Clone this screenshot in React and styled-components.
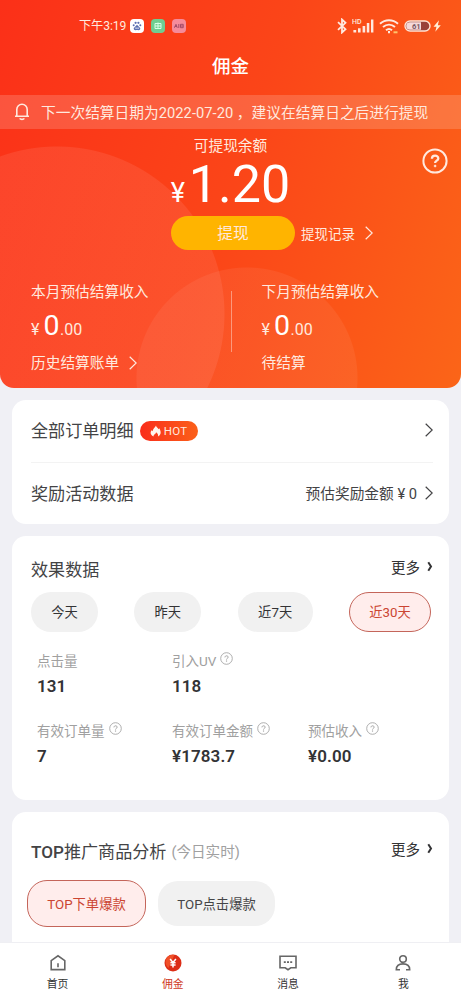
import styled, { createGlobalStyle, css } from "styled-components";

const theme = {
  white: "#ffffff",
  cream: "#ffe9df",
  page: "#f0f0f5",
  text: "#434345",
  textDark: "#333335",
  grey: "#a0a0a0",
  pill: "#f1f1f1",
  red: "#cb4532",
  redBorder: "#c4655a",
  redSoft: "#ffedec",
  yellow: "#ffb400",
};

const GlobalStyle = createGlobalStyle`
  * {
    box-sizing: border-box;
  }

  body {
    margin: 0;
    background: ${theme.page};
    font-family: Roboto, "Noto Sans CJK SC", sans-serif;
    color: ${theme.text};
  }

  h1, h2, p {
    margin: 0;
    font-weight: 400;
  }

  svg {
    display: block;
    flex: none;
  }
`;

const Screen = styled.div`
  display: flex;
  flex-direction: column;
  width: 461px;
  height: 1000px;
  overflow: hidden;
`;

const Content = styled.main`
  flex: 1;
  min-height: 0;
  overflow: hidden;
`;

const Hero = styled.header`
  height: 388px;
  overflow: hidden;
  border-radius: 0 0 14px 14px;
  color: ${theme.cream};
  background:
    radial-gradient(circle at 247px 378px, rgba(255, 255, 255, 0.06) 110px, transparent 111px),
    radial-gradient(circle at 57px 314px, rgba(255, 130, 110, 0.22) 167px, transparent 168px),
    linear-gradient(108deg, #fb3018 0%, #fb4518 50%, #fb6518 100%);
`;

const StatusBar = styled.div`
  display: flex;
  align-items: center;
  height: 52px;
  padding: 0 19px 0 79px;
  font-size: 13px;
`;

const Clock = styled.span`
  width: 51px;
  white-space: nowrap;
  font-size: 12.2px;
  line-height: 16px;
  letter-spacing: -0.1px;
`;

const AppBadge = styled.span`
  display: flex;
  align-items: center;
  justify-content: center;
  width: 14px;
  height: 14px;
  margin-right: 7px;
  border-radius: 4px;
  background: ${(props) => props.$color};
`;

const StatusIcons = styled.div`
  display: flex;
  align-items: center;
  gap: 5px;
  margin-left: auto;
`;

const PageTitle = styled.h1`
  height: 28px;
  line-height: 30px;
  text-align: center;
  font-size: 18.5px;
  font-weight: 500;
  color: ${theme.white};
`;

const Notice = styled.div`
  display: flex;
  align-items: center;
  height: 34px;
  margin-top: 15px;
  padding: 0 0 1px 14px;
  background: rgba(255, 255, 255, 0.17);
  white-space: nowrap;
  font-size: 14.7px;

  p {
    margin-left: 11px;
    letter-spacing: 0.03px;
  }
`;

const Balance = styled.section`
  display: grid;
  grid-template-columns: 1fr 290px 1fr;
  height: 87px;

  > svg {
    margin: 19px 0 0 46px;
  }
`;

const BalanceInfo = styled.div`
  grid-column: 2;
  text-align: center;
  font-size: 14.7px;
  line-height: 35px;
`;

const BalanceAmount = styled.div`
  display: flex;
  align-items: baseline;
  justify-content: center;
  height: 52px;
  margin-top: -8px;
  line-height: 58px;
  font-size: 52px;
  color: ${theme.white};

  small {
    width: 18px;
    font-size: 27px;
    text-align: left;
  }
`;

const Withdraw = styled.div`
  display: flex;
  align-items: center;
  height: 34px;
  padding-left: 171px;
  font-size: 13.5px;

  > span {
    margin: 0 10px 0 6px;
  }
`;

const WithdrawButton = styled.button`
  width: 124px;
  height: 34px;
  padding: 0 0 2px;
  border: 0;
  border-radius: 17px;
  background: ${theme.yellow};
  color: ${theme.cream};
  font: inherit;
  font-size: 15.7px;
`;

const Forecasts = styled.section`
  display: flex;
  align-items: flex-start;
  margin-top: 31px;
  padding-left: 31px;
`;

const ForecastDivider = styled.div`
  width: 1px;
  height: 61px;
  margin: 10px 30px 0 0;
  background: rgba(255, 255, 255, 0.4);
`;

const ForecastColumn = styled.div`
  width: 200px;
  font-size: 14.7px;
  line-height: 22px;
`;

const ForecastAmount = styled.div`
  height: 38px;
  margin: 4px 0 0;
  line-height: 38px;
  font-size: 16px;

  b {
    margin: 0 0.5px 0 4px;
    font-size: 28.5px;
    font-weight: 400;
    color: ${theme.white};
  }
`;

const ForecastFooter = styled.div`
  display: flex;
  align-items: center;
  gap: 10px;
  margin-top: 7px;
`;

const Card = styled.section`
  height: ${(props) => props.$height}px;
  margin: 12px 12px 0;
  padding: ${(props) => props.$top || 0}px 16px 0 19px;
  border-radius: 14px;
  background: ${theme.white};
`;

const MenuRow = styled.div`
  display: flex;
  align-items: center;
  height: 62px;
  padding-bottom: 3px;
  font-size: 17.1px;

  & + & {
    border-top: 1px solid #f3f3f3;
  }
`;

const RowEnd = styled.span`
  display: flex;
  align-items: center;
  gap: 8px;
  margin-left: auto;
  font-size: 14.7px;

  svg {
    margin-top: 1px;
  }
`;

const HotBadge = styled.span`
  display: flex;
  align-items: center;
  justify-content: center;
  gap: 3px;
  width: 58px;
  height: 20px;
  margin: 3px 0 0 6px;
  border-radius: 10px;
  background: linear-gradient(90deg, #fa2d1b, #fb6019);
  color: ${theme.cream};
  font-size: 11.5px;
  letter-spacing: 0.3px;
`;

const CardHeader = styled.div`
  display: flex;
  align-items: center;
  height: 30px;

  h2 {
    font-size: 17.1px;
  }

  b {
    font-weight: 500;
  }

  em {
    margin-left: 5px;
    color: ${theme.grey};
    font-size: 14.6px;
    font-style: normal;
  }
`;

const More = styled.span`
  display: flex;
  align-items: center;
  gap: 7px;
  margin: 0 0 4px auto;
  color: ${theme.textDark};
  font-size: 14.5px;
`;

const Pill = styled.button`
  width: ${(props) => props.$width}px;
  height: 40px;
  padding: 0 0 1px;
  border: 0;
  border-radius: 20px;
  background: ${theme.pill};
  color: ${theme.textDark};
  font: inherit;
  font-size: 13.3px;

  ${(props) =>
    props.$active &&
    css`
      border: 1px solid ${theme.redBorder};
      background: ${theme.redSoft};
      color: ${theme.red};
    `}
`;

const Periods = styled.div`
  display: flex;
  justify-content: space-between;
  margin-top: 9px;
  padding-right: 2px;
`;

const Metrics = styled.div`
  display: grid;
  grid-template-columns: 135px 136px 1fr;
  grid-auto-rows: 70px;
  margin-top: 16px;
  padding-left: 6px;
`;

const MetricLabel = styled.div`
  display: flex;
  align-items: center;
  gap: 4px;
  height: 24px;
  color: ${theme.grey};
  font-size: 13.5px;
  white-space: nowrap;

  svg {
    margin-bottom: 3px;
  }
`;

const MetricValue = styled.div`
  height: 26px;
  line-height: 26px;
  margin-top: 1px;
  color: ${theme.textDark};
  font-size: 17px;
  font-weight: 600;
  letter-spacing: 0.1px;
`;

const Chips = styled.div`
  display: flex;
  align-items: center;
  gap: 12px;
  margin: 15px 0 0 -4px;

  ${Pill} {
    height: 45px;
    padding: 0;
    color: #454547;
  }

  ${Pill}:first-child {
    height: 47px;
    color: ${theme.red};
  }
`;

const TabBar = styled.nav`
  display: grid;
  grid-template-columns: repeat(4, 1fr);
  height: 58px;
  background: ${theme.white};
  border-top: 1px solid #efeff3;
`;

const TabItem = styled.div`
  display: flex;
  flex-direction: column;
  align-items: center;
  padding-top: 11px;
  color: ${(props) => (props.$active ? "#cf3a24" : "#333")};
  font-size: 10.8px;

  span {
    margin-top: 5px;
    line-height: 16px;
  }
`;

const Chevron = () => (
  <svg width="8" height="14" viewBox="0 0 8 14" fill="none">
    <path d="M.7.7 7.2 7 .7 13.3" stroke="currentColor" strokeWidth="1.2" />
  </svg>
);

const SmallChevron = () => (
  <svg width="6" height="11" viewBox="0 0 6 11" fill="none">
    <path d="M1.3 1.2 4 5.5 1.3 9.8" stroke="currentColor" strokeWidth="2" />
  </svg>
);

const HelpIcon = ({ size = 13, stroke = 1.7 }) => (
  <svg width={size} height={size} viewBox="0 0 26 26" fill="none" stroke="currentColor">
    <circle cx="13" cy="13" r="11.6" strokeWidth={stroke} />
    <path d="M9.9 10.7c0-4 6.4-4 6.4-.3 0 2.2-3.2 2.3-3.2 4.6" strokeWidth={stroke * 1.15} />
    <circle cx="13.1" cy="18" r="1" fill="currentColor" strokeWidth={stroke * 0.3} />
  </svg>
);

const BellIcon = () => (
  <svg width="16" height="19" viewBox="0 0 16 19" fill="none" stroke="currentColor" strokeWidth="1.6">
    <path d="M1 14.3h14M2.8 14V7.4a5.2 5.2 0 0 1 10.4 0V14" />
    <path d="M5.7 16.3c.8 1.4 3.8 1.4 4.6 0" />
  </svg>
);

const BluetoothIcon = () => (
  <svg width="10" height="16" viewBox="0 0 10 16" fill="none" stroke="currentColor" strokeWidth="1.8">
    <path d="m1 4.2 7.5 7L5 14.5v-13l3.5 3.3L1 11.8" />
  </svg>
);

const SignalIcon = () => (
  <svg width="22" height="16" viewBox="0 0 22 16" fill="currentColor">
    <text x="0" y="5.8" fontSize="7" fontWeight="500" fontFamily="Roboto">HD</text>
    <path d="M1.4 12h2.8v2.4H1.4zM6 10.3h2.6v4.1H6zM10.6 8h2.6v6.4h-2.6zM14.8 5h2.5v9.4h-2.5zM19 1.6h2.4v12.8H19z" />
  </svg>
);

const WifiIcon = () => (
  <svg width="20" height="15" viewBox="0 0 20 15" fill="none" stroke="currentColor" strokeWidth="2">
    <path d="M1 4.8c5.2-4.7 12.8-4.7 18 0M4 8.1c3.6-3.1 8.4-3.1 12 0M7 11.2c1.8-1.5 4.2-1.5 6 0" />
    <path d="M10 12v2.3" />
    <path d="M14.5 13.3h4" stroke="#ffc36b" />
  </svg>
);

const BatteryIcon = () => (
  <svg width="38" height="14" viewBox="0 0 38 14">
    <rect x="1" y="2" width="25" height="10" rx="5" fill="#9a4039" stroke="#ffe3d5" strokeWidth="1.4" />
    <path d="M6 3.2h11v7.6H6a3.8 3.8 0 0 1 0-7.6" fill="#f5d9da" />
    <text x="8" y="9.8" fontSize="7.6" fontWeight="700" fontFamily="Roboto" fill="#795762">61</text>
    <path d="m35 1.2-5.5 6.5h3l-1.2 5.1 5.5-6.6h-3z" fill="#fff0d8" />
  </svg>
);

const PawIcon = () => (
  <svg width="10" height="10" viewBox="0 0 10 10" fill="#5b6fb0">
    <circle cx="3.6" cy="1.8" r="1.1" />
    <circle cx="6.4" cy="1.8" r="1.1" />
    <circle cx="1.7" cy="4.2" r="1" />
    <circle cx="8.3" cy="4.2" r="1" />
    <path d="M5 3.8 8.2 7c.6 2.5-2 2.2-3.2 2-1.2.2-3.8.5-3.2-2z" />
    <path d="M3.6 6.5v1h1v-1M5.6 6.5v1h1v-1" fill="none" stroke="#fff" strokeWidth=".6" />
  </svg>
);

const GridIcon = () => (
  <svg width="8" height="8" viewBox="0 0 8 8" fill="none" stroke="#d6ffe7" strokeWidth="1">
    <path d="M1 1.5h6v5H1zM1 4h6M4 .5v6" />
  </svg>
);

const PinkIcon = () => (
  <svg width="10" height="6" viewBox="0 0 10 6" fill="none" stroke="#a34b69" strokeWidth="1">
    <path d="M.3 4.8 2 1.3l1.3 3.5M1 3.5h2M4.8 1v4M6.5 1.3h2.7v3.4H6.5zM6.5 3h2.7" />
  </svg>
);

const FlameIcon = () => (
  <svg width="11" height="12" viewBox="0 0 11 12" fill="#fff4ed">
    <path d="M6 .5c.3 2 2 2.4 2.5 3.7.4-.2.6-.5.7-.9 2.3 3.5 1.9 6.4-1.2 8.2.4-1.8-.3-3-2-4.2.1 1.8-2.8 1.9-2.5 4.2C.1 9.5-.2 7 2 4.9c.1.7.4 1.1.8 1.3C2.8 3.5 4.9 3 6 .5z" />
  </svg>
);

const HomeIcon = () => (
  <svg width="16" height="18" viewBox="0 0 16 18" fill="none" stroke="#666" strokeWidth="1.6">
    <path d="M1.2 6.6 8 1.8l6.8 4.8v9H1.2zM8 9.3v4" />
  </svg>
);

const CoinIcon = () => (
  <svg width="18" height="18" viewBox="0 0 18 18" fill="none">
    <circle cx="9" cy="9" r="8.5" fill="#dc2d16" />
    <path d="M3.4 3a8.3 8.3 0 0 1 7-2l-6 13C1 11 .6 6.2 3.4 3" fill="#f05028" />
    <path d="M6.1 5 9 8.5 11.9 5M9 8.5v5M6.4 8.8h5.2M6.4 11h5.2" stroke="#fff" strokeWidth="1.5" />
  </svg>
);

const MessageIcon = () => (
  <svg width="18" height="18" viewBox="0 0 18 18" fill="none" stroke="#666" strokeWidth="1.6">
    <path d="M1 2.3h16v11.5h-5.2L9 15.7l-2.8-1.9H1z" />
    <path d="M4.8 8.1h2M8 8.1h2M11.2 8.1h2" strokeWidth="1.7" />
  </svg>
);

const UserIcon = () => (
  <svg width="16" height="18" viewBox="0 0 16 18" fill="none" stroke="#666" strokeWidth="1.6">
    <circle cx="8" cy="5" r="3.3" />
    <path d="M5 15.8H1.3c0-3.8 2.6-5.9 6.7-5.9s6.7 2.1 6.7 5.9H11" />
  </svg>
);

const periods = [
  { label: "今天", width: 67 },
  { label: "昨天", width: 67 },
  { label: "近7天", width: 75 },
  { label: "近30天", width: 82, active: true },
];

const metrics = [
  { label: "点击量", value: "131" },
  { label: "引入UV", value: "118", help: true },
  null,
  { label: "有效订单量", value: "7", help: true },
  { label: "有效订单金额", value: "¥1783.7", help: true },
  { label: "预估收入", value: "¥0.00", help: true },
];

const tabs = [
  { label: "首页", Icon: HomeIcon },
  { label: "佣金", Icon: CoinIcon, active: true },
  { label: "消息", Icon: MessageIcon },
  { label: "我", Icon: UserIcon },
];

const Forecast = ({ label, children }) => (
  <ForecastColumn>
    <p>{label}</p>
    <ForecastAmount>
      ¥<b>0</b>.00
    </ForecastAmount>
    <ForecastFooter>{children}</ForecastFooter>
  </ForecastColumn>
);

const App = () => {
  return (
    <Screen>
      <GlobalStyle />
      <Content>
        <Hero>
          <StatusBar>
            <Clock>下午3:19</Clock>
            <AppBadge $color="#fff"><PawIcon /></AppBadge>
            <AppBadge $color="#70cd91"><GridIcon /></AppBadge>
            <AppBadge $color="#f58b9b"><PinkIcon /></AppBadge>
            <StatusIcons>
              <BluetoothIcon />
              <SignalIcon />
              <WifiIcon />
              <BatteryIcon />
            </StatusIcons>
          </StatusBar>
          <PageTitle>佣金</PageTitle>
          <Notice>
            <BellIcon />
            <p>下一次结算日期为2022-07-20 ，建议在结算日之后进行提现</p>
          </Notice>
          <Balance>
            <BalanceInfo>
              <p>可提现余额</p>
              <BalanceAmount>
                <small>¥</small>1.20
              </BalanceAmount>
            </BalanceInfo>
            <HelpIcon size={26} stroke={2} />
          </Balance>
          <Withdraw>
            <WithdrawButton>提现</WithdrawButton>
            <span>提现记录</span>
            <Chevron />
          </Withdraw>
          <Forecasts>
            <Forecast label="本月预估结算收入">
              历史结算账单 <Chevron />
            </Forecast>
            <ForecastDivider />
            <Forecast label="下月预估结算收入">待结算</Forecast>
          </Forecasts>
        </Hero>

        <Card $height={124}>
          <MenuRow>
            全部订单明细
            <HotBadge>
              <FlameIcon />
              HOT
            </HotBadge>
            <RowEnd><Chevron /></RowEnd>
          </MenuRow>
          <MenuRow>
            奖励活动数据
            <RowEnd>
              预估奖励金额 ¥ 0 <Chevron />
            </RowEnd>
          </MenuRow>
        </Card>

        <Card $height={264} $top={17}>
          <CardHeader>
            <h2>效果数据</h2>
            <More>更多 <SmallChevron /></More>
          </CardHeader>
          <Periods>
            {periods.map(({ label, width, active }) => (
              <Pill key={label} $width={width} $active={active}>{label}</Pill>
            ))}
          </Periods>
          <Metrics>
            {metrics.map((metric, index) => (
              <div key={index}>
                {metric && (
                  <>
                    <MetricLabel>
                      {metric.label}
                      {metric.help && <HelpIcon />}
                    </MetricLabel>
                    <MetricValue>{metric.value}</MetricValue>
                  </>
                )}
              </div>
            ))}
          </Metrics>
        </Card>

        <Card $height={150} $top={23}>
          <CardHeader>
            <h2><b>TOP</b>推广商品分析</h2>
            <em>(今日实时)</em>
            <More>更多 <SmallChevron /></More>
          </CardHeader>
          <Chips>
            <Pill $width={119} $active>TOP下单爆款</Pill>
            <Pill $width={117}>TOP点击爆款</Pill>
          </Chips>
        </Card>
      </Content>

      <TabBar>
        {tabs.map(({ label, Icon, active }) => (
          <TabItem key={label} $active={active}>
            <Icon />
            <span>{label}</span>
          </TabItem>
        ))}
      </TabBar>
    </Screen>
  );
};

export default App;
